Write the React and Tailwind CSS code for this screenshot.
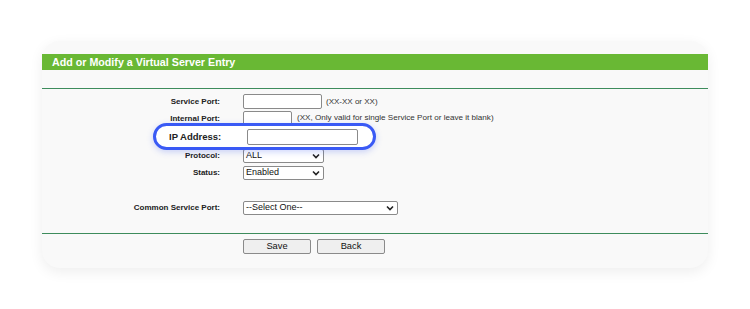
import React from 'react'

const font = { fontFamily: '"Liberation Sans", Arial, sans-serif' }

function Chevron() {
  return (
    <svg width="8" height="6" viewBox="0 0 8 6" className="shrink-0">
      <path d="M1 1.5l3 3 3-3" fill="none" stroke="#222" strokeWidth="1.6" />
    </svg>
  )
}

function Select({ value, width }) {
  return (
    <div
      className="flex h-[14px] items-center justify-between rounded-[2px] border border-[#8a8a8a] bg-white pl-[2px] pr-[3px] text-[9px] leading-none text-[#111]"
      style={{ width }}
    >
      <span>{value}</span>
      <Chevron />
    </div>
  )
}

function Input({ width }) {
  return (
    <div
      className="h-[15px] rounded-[2px] border border-[#8a8a8a] bg-white"
      style={{ width }}
    />
  )
}

function Row({ label, height = 'h-[17px]', children }) {
  return (
    <div className={`flex items-center ${height}`}>
      <div className="w-[178px] text-right text-[8px] font-bold leading-none text-[#222]">
        {label}
      </div>
      <div className="ml-[23px] flex items-center">{children}</div>
    </div>
  )
}

export default function App() {
  return (
    <div className="min-h-screen bg-white pl-[42px] pt-[41px]" style={font}>
      <div className="relative h-[227px] w-[666px] rounded-[18px] bg-[#f9f9f9] shadow-[0_4px_14px_rgba(0,0,0,0.07)]">
        <div className="pt-[13px]">
          {/* header strip */}
          <div className="flex h-[16px] items-center bg-[#69b834] pl-[10px] text-[10.7px] font-bold text-white">
            Add or Modify a Virtual Server Entry
          </div>
          <div className="h-[18px]" />
          <div className="h-px bg-[#3d8c5c]" />

          {/* form rows */}
          <div className="pt-[4px]">
            <Row label="Service Port:">
              <Input width={79} />
              <span className="ml-[4px] text-[8px] text-[#333]">(XX-XX or XX)</span>
            </Row>
            <Row label="Internal Port:">
              <Input width={49} />
              <span className="ml-[5px] text-[8.1px] text-[#333]">
                (XX, Only valid for single Service Port or leave it blank)
              </span>
            </Row>
            <div className="h-[20px]" />
            <Row label="Protocol:">
              <Select value="ALL" width={81} />
            </Row>
            <Row label="Status:">
              <Select value="Enabled" width={81} />
            </Row>
            <div className="h-[18px]" />
            <Row label="Common Service Port:">
              <Select value="--Select One--" width={155} />
            </Row>
            <div className="h-[17px]" />
          </div>

          <div className="h-px bg-[#3d8c5c]" />
          <div className="flex gap-[6px] pl-[201px] pt-[5px]">
            <button className="h-[15px] w-[68px] rounded-[2px] border border-[#8a8a8a] bg-[#efefef] text-[9.3px] leading-none text-[#111]">
              Save
            </button>
            <button className="h-[15px] w-[68px] rounded-[2px] border border-[#8a8a8a] bg-[#efefef] text-[9.3px] leading-none text-[#111]">
              Back
            </button>
          </div>
        </div>

        {/* highlight callout over the IP Address row */}
        <div className="absolute left-[111px] top-[82px] flex h-[27px] w-[223px] items-center rounded-full border-[3px] border-[#3a5af5] bg-white pl-[13px] shadow-[0_2px_6px_rgba(58,90,245,0.25)]">
          <span className="w-[78px] text-[9.5px] font-bold leading-none text-[#222]">IP Address:</span>
          <div className="h-[16px] w-[111px] rounded-[2px] border border-[#8a8a8a] bg-white" />
        </div>
      </div>
    </div>
  )
}
